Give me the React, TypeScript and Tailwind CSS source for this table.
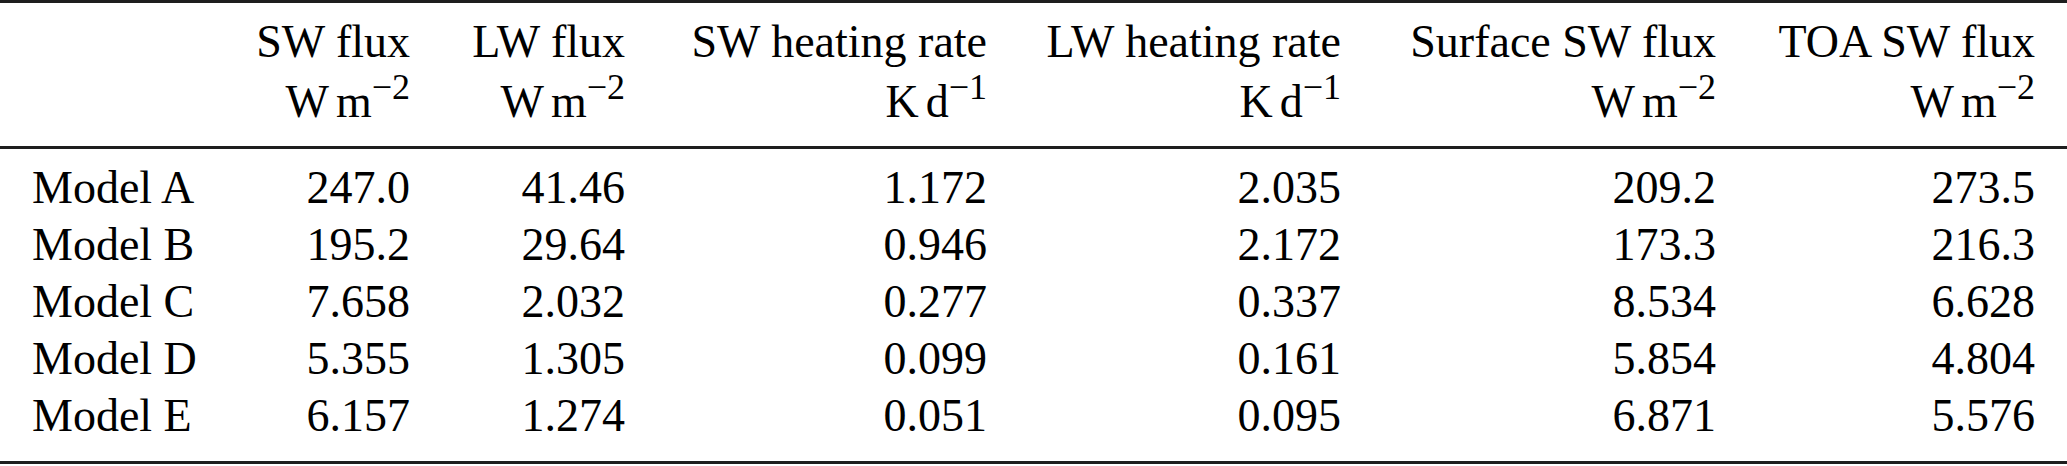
import React from "react";

type Col = { title: string; unit: string; exp: string };

const cols: Col[] = [
  { title: "SW flux", unit: "W", exp: "m" },
  { title: "LW flux", unit: "W", exp: "m" },
  { title: "SW heating rate", unit: "K", exp: "d" },
  { title: "LW heating rate", unit: "K", exp: "d" },
  { title: "Surface SW flux", unit: "W", exp: "m" },
  { title: "TOA SW flux", unit: "W", exp: "m" },
];

const powers = ["−2", "−2", "−1", "−1", "−2", "−2"];

const rows: { name: string; vals: string[] }[] = [
  { name: "Model A", vals: ["247.0", "41.46", "1.172", "2.035", "209.2", "273.5"] },
  { name: "Model B", vals: ["195.2", "29.64", "0.946", "2.172", "173.3", "216.3"] },
  { name: "Model C", vals: ["7.658", "2.032", "0.277", "0.337", "8.534", "6.628"] },
  { name: "Model D", vals: ["5.355", "1.305", "0.099", "0.161", "5.854", "4.804"] },
  { name: "Model E", vals: ["6.157", "1.274", "0.051", "0.095", "6.871", "5.576"] },
];

const gridCols = "grid grid-cols-[229px_213px_215px_362px_354px_375px_1fr]";

function Rule() {
  return <div className="h-[3px] w-full bg-[#1e1e1e]" />;
}

export default function App() {
  return (
    <div className="w-[2067px] h-[466px] bg-white text-black font-['Liberation_Serif','Times_New_Roman',serif] text-[46px] overflow-hidden">
      <Rule />
      <div className={`${gridCols} pt-[9px] pb-[14px]`}>
        <div />
        {cols.map((c, i) => (
          <div key={c.title} className="flex flex-col items-end pr-[32px] leading-[60px] whitespace-nowrap">
            <span>{c.title}</span>
            <span>
              {c.unit}
              <span className="ml-[7px]">{c.exp}</span>
              <sup className="text-[36px]">{powers[i]}</sup>
            </span>
          </div>
        ))}
      </div>
      <Rule />
      <div className={`${gridCols} pt-[10px] pb-[17px]`}>
        {rows.map((r) => (
          <React.Fragment key={r.name}>
            <div className="pl-[32px] leading-[57px] whitespace-nowrap">{r.name}</div>
            {r.vals.map((v, j) => (
              <div key={j} className="pr-[32px] text-right leading-[57px]">
                {v}
              </div>
            ))}
          </React.Fragment>
        ))}
      </div>
      <Rule />
    </div>
  );
}
